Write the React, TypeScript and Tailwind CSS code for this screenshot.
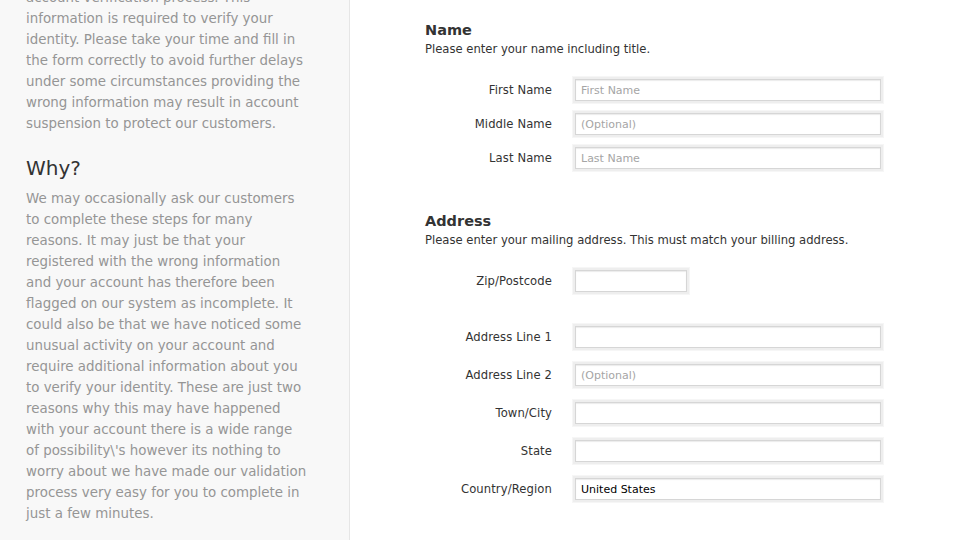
const intro = [
  "account verification process. This",
  "information is required to verify your",
  "identity. Please take your time and fill in",
  "the form correctly to avoid further delays",
  "under some circumstances providing the",
  "wrong information may result in account",
  "suspension to protect our customers.",
];

const why = [
  "We may occasionally ask our customers",
  "to complete these steps for many",
  "reasons. It may just be that your",
  "registered with the wrong information",
  "and your account has therefore been",
  "flagged on our system as incomplete. It",
  "could also be that we have noticed some",
  "unusual activity on your account and",
  "require additional information about you",
  "to verify your identity. These are just two",
  "reasons why this may have happened",
  "with your account there is a wide range",
  "of possibility\\'s however its nothing to",
  "worry about we have made our validation",
  "process very easy for you to complete in",
  "just a few minutes.",
];

function Lines({ lines }: { lines: string[] }) {
  return (
    <p className="text-[13.4px] leading-[21px] text-[#959595]">
      {lines.map((l) => (
        <span key={l} className="block whitespace-nowrap">
          {l}
        </span>
      ))}
    </p>
  );
}

function Field({
  label,
  placeholder,
  value,
  short,
}: {
  label: string;
  placeholder?: string;
  value?: string;
  short?: boolean;
}) {
  return (
    <div className="flex items-center">
      <label className="w-[127px] pt-[2px] text-right text-[11.6px] tracking-[0.1px] text-[#333]">
        {label}
      </label>
      <input
        readOnly
        placeholder={placeholder}
        value={value}
        className={`ml-[23px] h-[22px] border border-[#d6d6d6] bg-white px-[5px] text-[11px] text-black placeholder:text-[#a5a5a5] shadow-[0_0_0_2px_#eeeeee,0_0_0_3px_#f6f6f6,inset_0_1px_1px_#ececec] outline-none ${
          short ? "w-[112px]" : "w-[306px]"
        }`}
      />
    </div>
  );
}

export default function App() {
  return (
    <div
      className="flex h-[540px] w-[960px] overflow-hidden bg-white"
      style={{ fontFamily: '"DejaVu Sans", "Noto Sans", sans-serif' }}
    >
      <aside className="w-[350px] shrink-0 border-r border-[#e6e6e6] bg-[#f8f8f8] pl-[26px]">
        <div className="-mt-[13px]">
          <Lines lines={intro} />
          <h2 className="mt-[22px] text-[20px] leading-[24px] text-[#333]">Why?</h2>
          <div className="mt-[8px]">
            <Lines lines={why} />
          </div>
        </div>
      </aside>

      <main className="flex-1 pl-[75px] pt-[21px] text-[#333]">
        <h3 className="text-[14.5px] font-bold leading-[19px]">Name</h3>
        <p className="text-[11.6px] leading-[18px]">Please enter your name including title.</p>
        <div className="mt-[21px] flex flex-col gap-[12px]">
          <Field label="First Name" placeholder="First Name" />
          <Field label="Middle Name" placeholder="(Optional)" />
          <Field label="Last Name" placeholder="Last Name" />
        </div>

        <h3 className="mt-[43px] text-[14.5px] font-bold leading-[19px]">Address</h3>
        <p className="text-[11.6px] leading-[18px]">
          Please enter your mailing address. This must match your billing address.
        </p>
        <div className="mt-[21px]">
          <Field label="Zip/Postcode" short />
        </div>
        <div className="mt-[34px] flex flex-col gap-[16px]">
          <Field label="Address Line 1" />
          <Field label="Address Line 2" placeholder="(Optional)" />
          <Field label="Town/City" />
          <Field label="State" />
          <Field label="Country/Region" value="United States" />
        </div>
      </main>
    </div>
  );
}
